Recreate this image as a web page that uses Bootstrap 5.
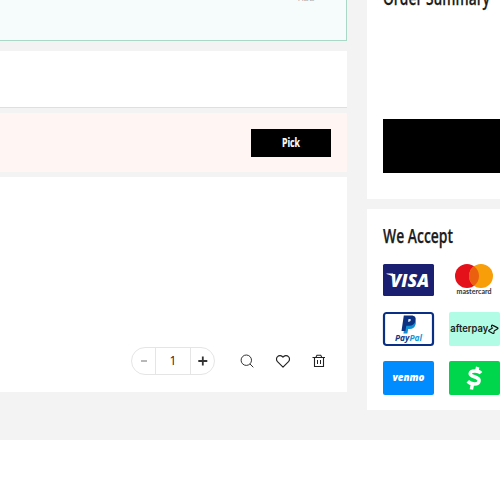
<!DOCTYPE html>
<html lang="en">
<head>
<meta charset="utf-8">
<meta name="viewport" content="width=device-width, initial-scale=1">
<title>Cart</title>
<link href="https://cdn.jsdelivr.net/npm/bootstrap@5.3.0/dist/css/bootstrap.min.css" rel="stylesheet">
<style>
  body { width: 500px; height: 500px; overflow: hidden; font-family: "Open Sans", "Noto Sans", sans-serif; color: #222; }
  svg { display: block; overflow: visible; }
  .cart-page { height: 440px; background: #f3f3f3; gap: 20px; }
  .cart-items { width: 347px; }
  .cart-side { width: 133px; gap: 10px; }
  .ship-box { height: 41px; background: #f6fcfc; border-right: 1px solid #a9d8c6; border-bottom: 1px solid #a9d8c6; padding-right: 31px; margin-bottom: 10px; }
  .add-label { font-size: 8px; line-height: 12px; height: 12px; margin-top: -8px; color: #aaa; }
  .select-row { height: 57px; border-bottom: 1px solid #dfdfdf; margin-bottom: 5px; }
  .promo-row { height: 59px; background: #fff5f2; margin-bottom: 5px; }
  .btn-pick { width: 80px; height: 28px; background: #000; color: #fff; }
  .item-row { height: 215px; padding: 0 20px 17px 0; }
  .qty { width: 84px; height: 28px; border: 1px solid #e5e5e5; border-radius: 14px; font-size: 12px; color: #222; }
  .qty-value { width: 36px; border: solid #e5e5e5; border-width: 0 1px; }
  .item-tools { gap: 20px; margin-left: 24px; }
  .summary-panel { height: 199px; padding: 0 0 26px 16px; }
  .summary-title { margin-top: -12px; height: 24px; }
  .checkout-bar { height: 54px; background: #000; }
  .accept-panel { height: 201px; padding: 16px 0 0 16px; }
  .accept-title { height: 24px; margin-bottom: 14px; }
  .pay-grid { display: grid; grid-template-columns: 51px 51px; column-gap: 15px; row-gap: 15px; }
  .head-text { font-size: 19.5px; font-weight: 600; fill: #1c1c1c; stroke: #1c1c1c; stroke-width: .25px; }
</style>
</head>
<body class="bg-white">
<main class="cart-page d-flex">
  <section class="cart-items flex-shrink-0">
    <div class="ship-box d-flex justify-content-end"><span class="add-label">ADD</span></div>
    <div class="select-row bg-white"></div>
    <div class="promo-row d-flex align-items-center justify-content-end pe-3">
      <button class="btn-pick btn rounded-0 border-0 p-0 d-flex align-items-center justify-content-center" aria-label="Pick">
        <svg width="18" height="16"><text x="0" y="12" font-size="12.500" font-weight="700" fill="#fff" stroke="#fff" stroke-width=".2" textLength="18" lengthAdjust="spacingAndGlyphs">Pick</text></svg>
      </button>
    </div>
    <div class="item-row bg-white d-flex align-items-end justify-content-end">
      <div class="qty d-flex">
        <span class="flex-fill d-flex align-items-center justify-content-center"><svg width="8" height="8"><path d="M1 4h6" stroke="#b8b8b8" stroke-width="2"/></svg></span>
        <span class="qty-value d-flex align-items-center justify-content-center">1</span>
        <span class="flex-fill d-flex align-items-center justify-content-center"><svg width="8" height="8"><path d="M-.7 4h9M3.800-.5v9" stroke="#333" stroke-width="1.800"/></svg></span>
      </div>
      <div class="item-tools d-flex align-self-end pb-1">
        <svg width="16" height="20" viewBox="0 0 16 20" fill="none" stroke="#333"><circle cx="7.300" cy="9.200" r="5.200"/><path d="M11 13l3.300 3.300"/></svg>
        <svg width="16" height="20" viewBox="0 0 16 20" fill="none" stroke="#222" stroke-width="1.150" stroke-linejoin="round"><path d="M8 16.200L2.500 10.700C1.100 9.200 1.200 6.800 2.500 5.600 4.100 4 6.600 4.300 8 6.100 9.400 4.300 11.900 4 13.500 5.600c1.300 1.200 1.400 3.600 0 5.100z"/></svg>
        <svg width="16" height="20" viewBox="0 0 16 20" fill="none" stroke="#222"><path d="M1.500 6.500h12.500M5 6l1-1.700h3.700l1 1.700M3.500 6.500v9h9v-9" stroke-width="1.100"/><path d="M6.500 9v4M9.500 9v4"/></svg>
      </div>
    </div>
  </section>

  <aside class="cart-side flex-shrink-0 d-flex flex-column">
    <div class="summary-panel bg-white d-flex flex-column justify-content-between">
      <h2 class="summary-title m-0 mb-auto"><svg width="107" height="24"><text class="head-text" x="0" y="4.500" textLength="107" lengthAdjust="spacingAndGlyphs">Order Summary</text></svg></h2>
      <div class="checkout-bar"></div>
    </div>
    <div class="accept-panel bg-white">
      <h2 class="accept-title mt-0"><svg width="70" height="24"><text class="head-text" x="0" y="18" textLength="70" lengthAdjust="spacingAndGlyphs">We Accept</text></svg></h2>
      <div class="pay-grid">
        <svg width="51" height="34" viewBox="0 0 51 34" role="img" aria-label="Visa">
          <rect y="1" width="51" height="32" rx="1.500" fill="#1a1f71"/>
          <text x="7.500" y="23.500" font-size="18" font-weight="800" font-style="italic" fill="#fff" textLength="38.500" lengthAdjust="spacingAndGlyphs">VISA</text>
          <path d="M3.500 10.500h6.500l2 6C10 13 7 11.500 3.500 10.900z" fill="#fff"/>
        </svg>
        <svg width="51" height="34" viewBox="0 0 51 34" role="img" aria-label="Mastercard">
          <circle cx="18" cy="13" r="12" fill="#e4111b"/><circle cx="32" cy="13" r="12" fill="#f79e08"/>
          <path d="M25 3.250a12 12 0 0 1 0 19.500a12 12 0 0 1 0-19.500z" fill="#ea6010"/>
          <text x="7.500" y="31.300" font-family="Lato, sans-serif" font-size="6.500" font-weight="700" fill="#333" textLength="35" lengthAdjust="spacingAndGlyphs">mastercard</text>
        </svg>
        <svg width="51" height="34" viewBox="0 0 51 34" role="img" aria-label="PayPal">
          <rect x="1" y="1" width="49" height="32" rx="2.500" fill="#fff" stroke="#0a3085" stroke-width="2.200"/>
          <path d="M23 7h6c3 0 4.400 2 3.700 5-.7 3.400-3 5-6 5h-1.500l-.8 4.400h-4z" fill="#1390d3"/>
          <path d="M20.800 3.500h7.500c3.600 0 5 2.200 4.200 5.200-.8 3.500-3 5-6.500 5h-2.700l-.9 5.300h-3.900z" fill="#0b3180"/>
          <path d="M25.500 7h1.200c.9 0 1.200.5 1 1.300-.2 1-.8 1.400-1.700 1.400h-1z" fill="#dfe8f5"/>
          <text x="12" y="29" font-size="8.500" font-weight="700" font-style="italic" fill="#123984" textLength="27" lengthAdjust="spacingAndGlyphs">Pay<tspan fill="#1698d8">Pal</tspan></text>
        </svg>
        <svg width="51" height="34" viewBox="0 0 51 34" role="img" aria-label="Afterpay">
          <rect width="51" height="34" rx="2" fill="#b0fce4"/>
          <text x="1.300" y="19.500" font-family="Inter, sans-serif" font-size="9.500" font-weight="600" fill="#222" textLength="38" lengthAdjust="spacingAndGlyphs">afterpay</text>
          <g fill="none" stroke="#111" stroke-width="1.200" stroke-linejoin="round"><path d="M42.500 15.500v-1.300q0-1.500 1.300-.8l4.500 2.200q1.300.7 0 1.500l-3.300 2"/><path d="M44 15.800L40.300 18q-1.200.8 0 1.500l3.300 1.800q1.400.7 1.400-.8v-1.300"/></g>
        </svg>
        <svg width="51" height="34" viewBox="0 0 51 34" role="img" aria-label="Venmo">
          <rect width="51" height="34" rx="2" fill="#008cff"/>
          <text x="9.500" y="20" font-size="10" font-weight="800" font-style="italic" fill="#fff" textLength="32" lengthAdjust="spacingAndGlyphs">venmo</text>
        </svg>
        <svg width="51" height="34" viewBox="0 0 51 34" role="img" aria-label="Cash App">
          <rect width="51" height="34" rx="2" fill="#00d64b"/>
          <path d="M32 12.200C29.500 9.300 21.700 9 21.200 12.600c-.3 3.700 9.500 2.700 8.900 7.200-.4 4.200-8 4-11.300.5M28.700 6l-.8 3.500M23.200 24.500l-.8 4" fill="none" stroke="#fff" stroke-width="3.500"/>
        </svg>
      </div>
    </div>
  </aside>
</main>
<script src="https://cdn.jsdelivr.net/npm/bootstrap@5.3.0/dist/js/bootstrap.bundle.min.js"></script>
</body>
</html>
